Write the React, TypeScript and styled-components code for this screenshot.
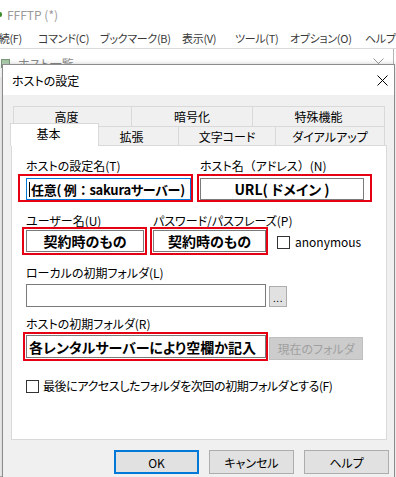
import React from 'react';
import styled, { createGlobalStyle, css } from 'styled-components';

const GlobalStyle = createGlobalStyle`
  html, body { margin: 0; padding: 0; background: #fff; }
  body {
    font-family: "Noto Sans CJK JP", "Noto Sans", sans-serif;
    font-size: 12px;
    color: #000;
    font-feature-settings: "palt";
  }
  * { box-sizing: border-box; }
`;

const Screen = styled.div`
  position: relative;
  width: 396px;
  height: 477px;
  overflow: hidden;
  background: #fff;
  display: flex;
  flex-direction: column;
`;

const AppTitle = styled.div`
  height: 27px;
  display: flex;
  align-items: center;
  gap: 5px;
  color: #9a9a9a;
  font-size: 12px;
  padding-top: 1px;
`;

const AppIcon = styled.span`
  width: 8px;
  height: 5px;
  margin-left: -6px;
  background: #3c8c2a;
  border-radius: 2px;
`;

const MenuBar = styled.div`
  height: 22px;
  display: flex;
  align-items: center;
  margin-left: -12px;
  border-bottom: 1px solid #dadada;
  color: #3a3a3a;
  font-size: 11px;
  letter-spacing: -0.3px;
  white-space: nowrap;
`;

const MenuItem = styled.span<{ $w?: number }>`
  flex: 0 0 ${p => (p.$w ? `${p.$w}px` : 'auto')};
`;

const HostList = styled.div`
  flex: 1;
  margin: 0 2px 0 -4px;
  border: 1px solid #b4b4b4;
  border-top: none;
  background: #f4f4f4;
  display: flex;
  flex-direction: column;
`;

const HostListTitle = styled.div`
  height: 28px;
  background: #fff;
  display: flex;
  align-items: center;
  padding: 0 9px 0 4px;
  gap: 8px;
  color: #8a8a8a;
`;

const HostListIcon = styled.span`
  width: 9px;
  height: 9px;
  border: 1px solid #7a9a7a;
  background: linear-gradient(#9fc39f, #d8e8d8);
`;

const Spacer = styled.span`
  flex: 1;
`;

const Dialog = styled.section`
  position: absolute;
  left: 2px;
  top: 64px;
  width: 393px;
  height: 440px;
  border: 1px solid #8c8c8c;
  background: #f0f0f0;
  display: flex;
  flex-direction: column;
  box-shadow: 0 0 5px rgba(0, 0, 0, 0.2);
`;

const DialogTitle = styled.header`
  height: 30px;
  flex: 0 0 30px;
  background: #fff;
  display: flex;
  align-items: center;
  justify-content: space-between;
  padding: 0 6px 0 9px;
  font-size: 12px;
`;

const DialogBody = styled.div`
  padding: 11px 6px 0 8px;
  display: flex;
  flex-direction: column;
`;

const TabRow = styled.div<{ $offset: number; $h: number }>`
  display: flex;
  height: ${p => p.$h}px;
  margin-left: ${p => p.$offset}px;
`;

const Tab = styled.div<{ $w: number; $selected?: boolean; $shift?: boolean }>`
  flex: 0 0 ${p => p.$w}px;
  display: flex;
  align-items: center;
  justify-content: center;
  border: 1px solid #d9d9d9;
  border-bottom: none;
  background: #f0f0f0;
  padding-right: ${p => (p.$shift ? 12 : 0)}px;
  white-space: nowrap;
  & + & {
    border-left: none;
  }
  ${p =>
    p.$selected &&
    css`
      position: relative;
      z-index: 2;
      flex-basis: ${p.$w + 4}px;
      margin: -3px -2px 0 -2px;
      align-self: flex-start;
      height: 23px;
      background: #fff;
      border-left: 1px solid #d9d9d9;
      padding-bottom: 3px;
    `}
`;

const Panel = styled.div`
  width: 376px;
  height: 295px;
  flex: 0 0 295px;
  background: #fff;
  border: 1px solid #d9d9d9;
  padding: 12px 0 0 14px;
  display: flex;
  flex-direction: column;
`;

const FieldRow = styled.div<{ $gap: number; $mt: number; $align?: string }>`
  display: flex;
  align-items: ${p => p.$align || 'flex-start'};
  gap: ${p => p.$gap}px;
  margin-top: ${p => p.$mt}px;
`;

const Column = styled.div<{ $w: number; $gap: number; $mt?: number }>`
  width: ${p => p.$w}px;
  display: flex;
  flex-direction: column;
  gap: ${p => p.$gap}px;
  margin-top: ${p => p.$mt || 0}px;
`;

const Label = styled.div`
  font-size: 12px;
  line-height: 14px;
  height: 14px;
  white-space: nowrap;
`;

const Wide = styled.span`
  font-feature-settings: normal;
`;

const FieldWrap = styled.div`
  position: relative;
`;

const Highlight = styled.div<{ $t: number; $l: number; $r: number; $b: number }>`
  position: absolute;
  top: ${p => -p.$t}px;
  left: ${p => -p.$l}px;
  right: ${p => -p.$r}px;
  bottom: ${p => -p.$b}px;
  border: 2px solid #e50014;
  pointer-events: none;
`;

const TextBox = styled.div<{
  $w: number;
  $h: number;
  $focused?: boolean;
  $center?: boolean;
  $bold?: boolean;
  $size?: number;
  $ls?: number;
}>`
  width: ${p => p.$w}px;
  height: ${p => p.$h}px;
  border: 1px solid ${p => (p.$focused ? '#0078d7' : '#7a7a7a')};
  background: #fff;
  display: flex;
  align-items: center;
  justify-content: ${p => (p.$center ? 'center' : 'flex-start')};
  padding: 0 2px;
  font-size: ${p => p.$size || 14}px;
  font-weight: ${p => (p.$bold ? 700 : 400)};
  letter-spacing: ${p => p.$ls || 0}px;
  white-space: nowrap;
  overflow: hidden;
`;

const Caret = styled.span`
  width: 1px;
  height: 15px;
  background: #000;
  margin-right: 1px;
`;

const SmallButton = styled.div<{ $w: number; $h: number; $disabled?: boolean }>`
  width: ${p => p.$w}px;
  height: ${p => p.$h}px;
  margin-top: 2px;
  border: 1px solid ${p => (p.$disabled ? '#bfbfbf' : '#adadad')};
  background: ${p => (p.$disabled ? '#cccccc' : '#e1e1e1')};
  color: ${p => (p.$disabled ? '#a0a0a0' : '#000')};
  display: flex;
  align-items: center;
  justify-content: center;
  font-size: 12px;
  white-space: nowrap;
`;

const Dots = styled.span`
  font-size: 10px;
  line-height: 10px;
  letter-spacing: 0.5px;
  margin-top: 2px;
`;

const CheckLine = styled.label<{ $mt?: number; $mb?: number; $ml?: number; $gap: number }>`
  display: flex;
  align-items: center;
  gap: ${p => p.$gap}px;
  margin-top: ${p => p.$mt || 0}px;
  margin-bottom: ${p => p.$mb || 0}px;
  margin-left: ${p => p.$ml || 0}px;
  white-space: nowrap;
  line-height: 14px;
`;

const CheckText = styled.span<{ $ls?: number }>`
  letter-spacing: ${p => p.$ls || 0}px;
`;

const CheckBox = styled.span`
  width: 13px;
  height: 13px;
  border: 1px solid #333;
  background: #fff;
`;

const ButtonRow = styled.div`
  display: flex;
  justify-content: flex-end;
  gap: 10px;
  margin: 10px -1px 0 0;
`;

const PushButton = styled.div<{ $default?: boolean }>`
  width: 85px;
  height: 24px;
  display: flex;
  align-items: center;
  justify-content: center;
  background: #e1e1e1;
  border: 1px solid ${p => (p.$default ? '#0078d7' : '#adadad')};
  box-shadow: ${p => (p.$default ? 'inset 0 0 0 1px #0078d7' : 'none')};
  font-size: 12px;
`;

const CloseIcon = ({ size, color }: { size: number; color: string }) => (
  <svg width={size} height={size} viewBox="0 0 11 11">
    <path d="M0.5 0.5 L10.5 10.5 M10.5 0.5 L0.5 10.5" stroke={color} strokeWidth="1" fill="none" />
  </svg>
);

export default function App() {
  return (
    <>
      <GlobalStyle />
      <Screen>
        <AppTitle>
          <AppIcon />
          <span>FFFTP (*)</span>
        </AppTitle>
        <MenuBar>
          <MenuItem $w={50}>接続(F)</MenuItem>
          <MenuItem $w={62}>コマンド(C)</MenuItem>
          <MenuItem $w={82}>ブックマーク(B)</MenuItem>
          <MenuItem $w={53}>表示(V)</MenuItem>
          <MenuItem $w={55}>ツール(T)</MenuItem>
          <MenuItem $w={75}>オプション(O)</MenuItem>
          <MenuItem>ヘルプ(H)</MenuItem>
        </MenuBar>
        <HostList>
          <HostListTitle>
            <HostListIcon />
            <span>ホスト一覧</span>
            <Spacer />
            <CloseIcon size={11} color="#999" />
          </HostListTitle>
        </HostList>

        <Dialog>
          <DialogTitle>
            <span>ホストの設定</span>
            <CloseIcon size={11} color="#000" />
          </DialogTitle>
          <DialogBody>
            <TabRow $offset={2} $h={20}>
              <Tab $w={119} $shift>高度</Tab>
              <Tab $w={121}>暗号化</Tab>
              <Tab $w={132}>特殊機能</Tab>
            </TabRow>
            <TabRow $offset={1} $h={19}>
              <Tab $w={85} $selected $shift>基本</Tab>
              <Tab $w={82} $shift>拡張</Tab>
              <Tab $w={97}>文字コード</Tab>
              <Tab $w={109}>ダイアルアップ</Tab>
            </TabRow>
            <Panel>
              <FieldRow $gap={9} $mt={1}>
                <Column $w={165} $gap={5}>
                  <Label>ホストの設定名(T)</Label>
                  <FieldWrap>
                    <TextBox $w={165} $h={22} $focused $bold $size={13} $ls={-0.25}>
                      <Caret />
                      任意( 例<Wide>：</Wide>sakuraサーバー)
                    </TextBox>
                    <Highlight $t={4} $l={8} $r={2} $b={2} />
                  </FieldWrap>
                </Column>
                <Column $w={164} $gap={5}>
                  <Label>
                    ホスト名<Wide>（</Wide>アドレス<Wide>）</Wide>(N)
                  </Label>
                  <FieldWrap>
                    <TextBox $w={164} $h={22} $center $bold>
                      URL( ドメイン )
                    </TextBox>
                    <Highlight $t={4} $l={3} $r={8} $b={2} />
                  </FieldWrap>
                </Column>
              </FieldRow>

              <FieldRow $gap={9} $mt={14} $align="flex-end">
                <Column $w={118} $gap={2}>
                  <Label>ユーザー名(U)</Label>
                  <FieldWrap>
                    <TextBox $w={118} $h={22} $center $bold>
                      契約時のもの
                    </TextBox>
                    <Highlight $t={3} $l={4} $r={3} $b={3} />
                  </FieldWrap>
                </Column>
                <Column $w={113} $gap={2}>
                  <Label>パスワード/パスフレーズ(P)</Label>
                  <FieldWrap>
                    <TextBox $w={113} $h={22} $center $bold>
                      契約時のもの
                    </TextBox>
                    <Highlight $t={3} $l={3} $r={2} $b={3} />
                  </FieldWrap>
                </Column>
                <CheckLine $gap={5} $mb={3} $ml={2}>
                  <CheckBox />
                  <CheckText>anonymous</CheckText>
                </CheckLine>
              </FieldRow>

              <Column $w={280} $gap={4} $mt={14}>
                <Label>ローカルの初期フォルダ(L)</Label>
                <FieldRow $gap={3} $mt={0}>
                  <TextBox $w={240} $h={23} />
                  <SmallButton $w={18} $h={21}>
                    <Dots>...</Dots>
                  </SmallButton>
                </FieldRow>
              </Column>

              <Column $w={340} $gap={4} $mt={10}>
                <Label>ホストの初期フォルダ(R)</Label>
                <FieldRow $gap={3} $mt={0}>
                  <FieldWrap>
                    <TextBox $w={240} $h={23} $bold>
                      各レンタルサーバーにより空欄か記入
                    </TextBox>
                    <Highlight $t={3} $l={3} $r={2} $b={3} />
                  </FieldWrap>
                  <SmallButton $w={94} $h={23} $disabled>
                    現在のフォルダ
                  </SmallButton>
                </FieldRow>
              </Column>

              <CheckLine $gap={4} $mt={19}>
                <CheckBox />
                <CheckText $ls={-0.4}>最後にアクセスしたフォルダを次回の初期フォルダとする(F)</CheckText>
              </CheckLine>
            </Panel>
            <ButtonRow>
              <PushButton $default>OK</PushButton>
              <PushButton>キャンセル</PushButton>
              <PushButton>ヘルプ</PushButton>
            </ButtonRow>
          </DialogBody>
        </Dialog>
      </Screen>
    </>
  );
}
